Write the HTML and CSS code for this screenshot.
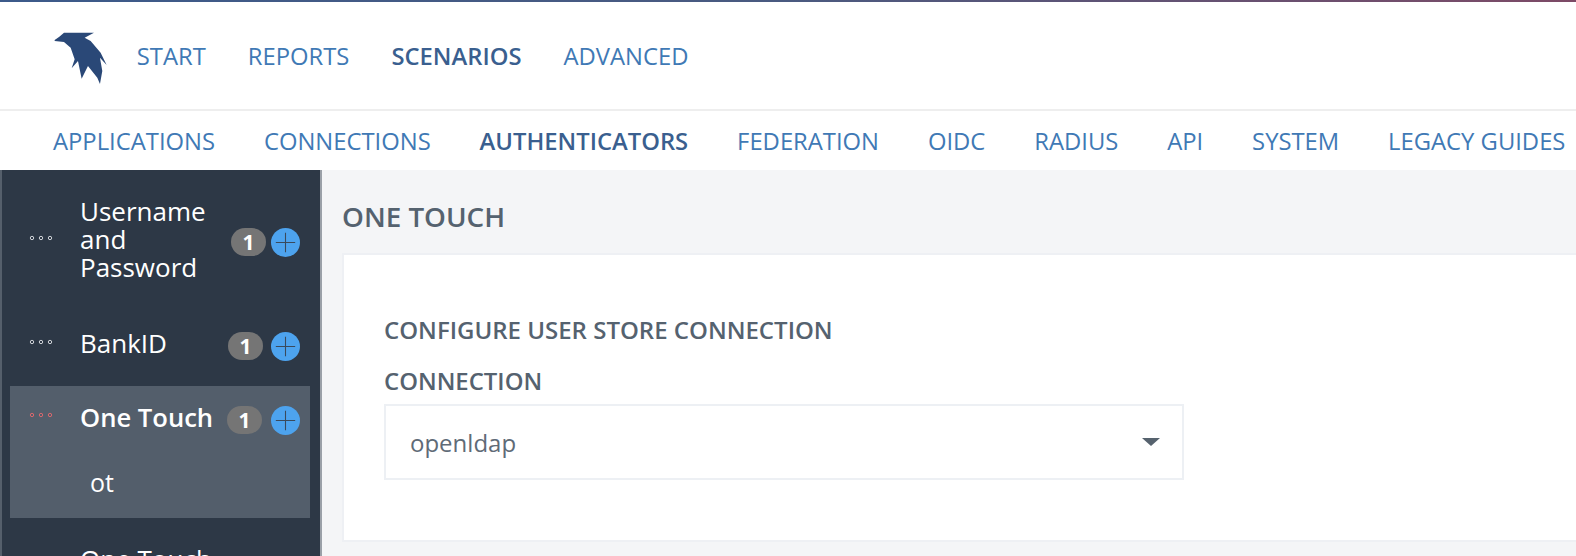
FILE: index.html
```html
<!DOCTYPE html>
<html lang="en">
<head>
<meta charset="utf-8">
<title>One Touch</title>
<link rel="stylesheet" href="styles.css">
</head>
<body>
<div class="topline"></div>
<header class="header">
  <svg class="logo" viewBox="160 98 160 157" aria-hidden="true"><path d="M162 122 L176 112 L190 100 L280 100 L252 115 L270 125 L300 160 L318 197 L298 175 L305 215 L298 254 L290 235 L262 200 L243 238 L232 185 L213 207 L222 180 L210 145 L190 128 L162 125 Z"/></svg>
  <nav class="mainnav">
    <a>START</a><a>REPORTS</a><a class="active">SCENARIOS</a><a>ADVANCED</a>
  </nav>
</header>
<nav class="subnav">
  <a>APPLICATIONS</a><a>CONNECTIONS</a><a class="active">AUTHENTICATORS</a><a>FEDERATION</a><a>OIDC</a><a>RADIUS</a><a>API</a><a>SYSTEM</a><a>LEGACY GUIDES</a>
</nav>
<div class="body">
  <aside class="sidebar">
    <div class="item item-user">
      <svg class="dots" viewBox="0 0 24 6"><circle cx="3" cy="3" r="1.7"/><circle cx="12" cy="3" r="1.7"/><circle cx="21" cy="3" r="1.7"/></svg>
      <span class="label">Username and Password</span>
      <span class="badge">1</span>
      <span class="plus"><svg viewBox="0 0 30 30"><path d="M15 5V25M5 15H25"/></svg></span>
    </div>
    <div class="item item-bank">
      <svg class="dots" viewBox="0 0 24 6"><circle cx="3" cy="3" r="1.7"/><circle cx="12" cy="3" r="1.7"/><circle cx="21" cy="3" r="1.7"/></svg>
      <span class="label">BankID</span>
      <span class="badge">1</span>
      <span class="plus"><svg viewBox="0 0 30 30"><path d="M15 5V25M5 15H25"/></svg></span>
    </div>
    <div class="group">
      <div class="item item-active">
        <svg class="dots" viewBox="0 0 24 6"><circle cx="3" cy="3" r="1.7"/><circle cx="12" cy="3" r="1.7"/><circle cx="21" cy="3" r="1.7"/></svg>
        <span class="label">One Touch</span>
        <span class="badge">1</span>
        <span class="plus"><svg viewBox="0 0 30 30"><path d="M15 5V25M5 15H25"/></svg></span>
      </div>
      <div class="child">ot</div>
    </div>
    <div class="item item-next">
      <svg class="dots" viewBox="0 0 24 6"><circle cx="3" cy="3" r="1.7"/><circle cx="12" cy="3" r="1.7"/><circle cx="21" cy="3" r="1.7"/></svg>
      <span class="label">One Touch</span>
    </div>
  </aside>
  <main class="main">
    <h1 class="title">ONE TOUCH</h1>
    <section class="card">
      <h2 class="heading">CONFIGURE USER STORE CONNECTION</h2>
      <label class="field-label">CONNECTION</label>
      <div class="select"><span>openldap</span><i class="caret"></i></div>
    </section>
  </main>
</div>
</body>
</html>
```

FILE: styles.css
```css
* { box-sizing: border-box; }
html, body { margin: 0; height: 100%; }
body {
  width: 1576px;
  height: 556px;
  overflow: hidden;
  background: #fff;
  font-family: "Open Sans", sans-serif;
  display: flex;
  flex-direction: column;
}
.topline {
  height: 2px;
  flex: none;
  background: linear-gradient(90deg, #3c5a8a 0%, #4a5a80 50%, #7d4a66 100%);
}
.header {
  height: 109px;
  flex: none;
  display: flex;
  align-items: center;
  padding: 0 0 3px 54px;
  border-bottom: 2px solid #eeeeee;
}
.logo { width: 53.3px; height: 52.3px; fill: #2a4877; flex: none; margin: 8px 29.5px 0 0; }
.mainnav { display: flex; gap: 42px; padding-top: 3px; }
.mainnav a, .subnav a { font-size: 23.8px; color: #4079b5; white-space: nowrap; }
.mainnav a.active, .subnav a.active { color: #3a5f8f; font-weight: 600; }
.subnav {
  height: 59px;
  flex: none;
  display: flex;
  align-items: center;
  gap: 48.9px;
  padding: 1px 0 0 53px;
}
.body { flex: 1; display: flex; min-height: 0; background: #f4f5f7; }
.sidebar {
  width: 322px;
  flex: none;
  background: #2d3846;
  border-left: 2px solid #555f6b;
  border-right: 2px solid #9aa0a8;
  overflow: hidden;
  color: #fff;
  font-size: 26px;
  line-height: 28px;
}
.item { display: flex; align-items: center; }
.dots { width: 24px; height: 6px; fill: none; stroke: #cfd3d8; stroke-width: 1; flex: none; margin: 0 27px 6px 27px; }
.label { flex: 1; min-width: 0; }
.badge {
  flex: none;
  width: 35px;
  height: 28px;
  margin-top: 4px;
  border-radius: 14px;
  background: #757575;
  font-size: 21px;
  font-weight: 700;
  line-height: 28px;
  text-align: center;
}
.plus {
  flex: none;
  width: 29px;
  height: 29px;
  margin: 4px 20px 0 5px;
  border-radius: 50%;
  background: #4da3ee;
  display: flex;
}
.plus svg { width: 29px; height: 29px; fill: none; stroke: #3a4a5c; stroke-width: 1.1; }
.item-user { height: 112px; padding-top: 26px; }
.item-user .badge, .item-user .plus { margin-top: 6px; }
.item-user .dots { margin-bottom: 2px; }
.item-bank { height: 100px; padding-top: 22px; }
.item-bank .badge, .item-bank .plus { margin-top: 6px; }
.item-bank .dots { margin-bottom: 2px; }
.item-bank .badge { margin-right: 3px; }
.item-active .label { font-size: 25.6px; font-weight: 600; white-space: nowrap; }
.item-active .badge { margin-right: 4px; }
.group {
  margin: 4px 10px 0 8px;
  background: #535e6b;
  height: 132px;
}
.group .dots { stroke: #d9686e; margin-left: 19px; }
.group .plus { margin-right: 10px; }
.item-active { height: 62px; padding-top: 2px; }
.child { padding: 20px 0 0 80px; font-size: 25px; }
.item-next { margin-top: 27px; align-items: flex-start; }
.item-next .dots { margin-top: 40px; }
.main { flex: 1; min-width: 0; padding: 30px 0 0 20px; color: #55626f; }
.title { margin: 0 0 21px; font-size: 27.8px; line-height: 32px; font-weight: 600; }
.card {
  height: 289px;
  margin-right: -2px;
  background: #fff;
  border: 2px solid #eef0f4;
  padding: 61px 0 0 40px;
}
.heading { margin: 0; font-size: 24px; line-height: 28px; font-weight: 600; }
.field-label { display: block; margin-top: 23px; font-size: 23.9px; line-height: 28px; font-weight: 600; }
.select {
  width: 800px;
  height: 76px;
  margin-top: 9px;
  border: 2px solid #edf0f4;
  padding: 0 22px 0 24px;
  display: flex;
  align-items: center;
  justify-content: space-between;
  font-size: 24px;
  color: #5f6b77;
}
.caret { width: 0; height: 0; border-left: 9px solid transparent; border-right: 9px solid transparent; border-top: 8px solid #56626e; }
```
